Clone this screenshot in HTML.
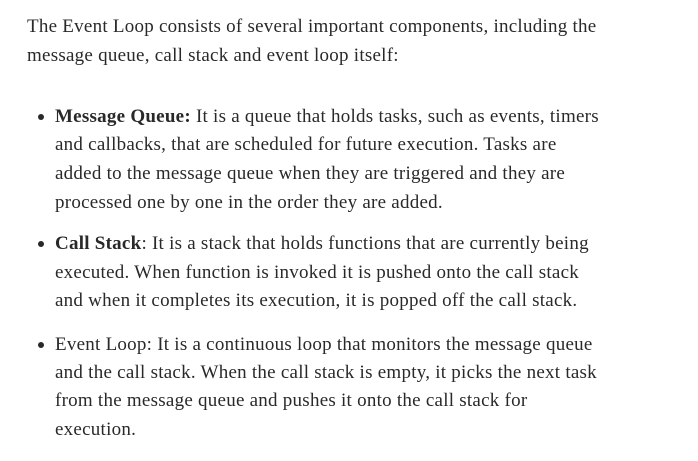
<!DOCTYPE html>
<html><head><meta charset="utf-8"><style>
html,body{margin:0;padding:0;background:#fff;width:698px;height:461px;overflow:hidden}
body{font-family:"Liberation Serif",serif;font-size:19px;color:#292929;letter-spacing:0.25px}
.l{position:absolute;white-space:nowrap;line-height:20px}
.b{position:absolute;width:6px;height:6px;border-radius:50%;background:#292929;left:38px}
</style></head><body>
<div class="l" style="left:27px;top:17px">The Event Loop consists of several important components, including the</div>
<div class="l" style="left:27px;top:46px">message queue, call stack and event loop itself:</div>

<div class="b" style="top:114px"></div>
<div class="l" style="left:55px;top:107px"><b>Message Queue:</b> It is a queue that holds tasks, such as events, timers</div>
<div class="l" style="left:55px;top:135px">and callbacks, that are scheduled for future execution. Tasks are</div>
<div class="l" style="left:55px;top:164px">added to the message queue when they are triggered and they are</div>
<div class="l" style="left:55px;top:193px">processed one by one in the order they are added.</div>

<div class="b" style="top:241px"></div>
<div class="l" style="left:55px;top:234px"><b>Call Stack</b>: It is a stack that holds functions that are currently being</div>
<div class="l" style="left:55px;top:263px">executed. When function is invoked it is pushed onto the call stack</div>
<div class="l" style="left:55px;top:291px">and when it completes its execution, it is popped off the call stack.</div>

<div class="b" style="top:342px"></div>
<div class="l" style="left:55px;top:335px">Event Loop: It is a continuous loop that monitors the message queue</div>
<div class="l" style="left:55px;top:363px">and the call stack. When the call stack is empty, it picks the next task</div>
<div class="l" style="left:55px;top:391px">from the message queue and pushes it onto the call stack for</div>
<div class="l" style="left:55px;top:420px">execution.</div>
</body></html>
